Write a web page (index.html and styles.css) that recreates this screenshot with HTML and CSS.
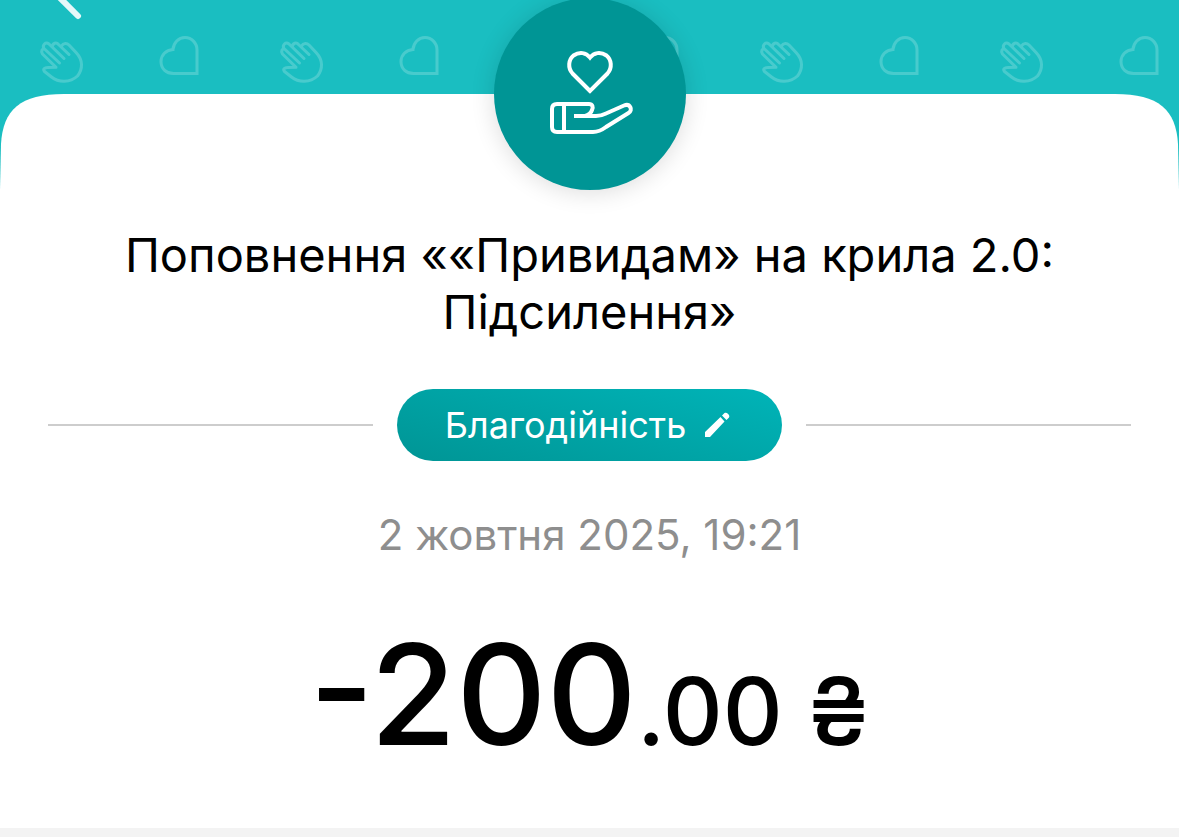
FILE: index.html
```html
<!DOCTYPE html>
<html lang="uk">
<head>
<meta charset="utf-8">
<meta name="viewport" content="width=device-width, initial-scale=1">
<title>Благодійність</title>
<link rel="stylesheet" href="styles.css">
</head>
<body>
<main class="receipt">
  <header class="hero">
    <svg class="hero-pattern" aria-hidden="true">
      <defs>
        <pattern id="charity" width="240" height="94" patternUnits="userSpaceOnUse">
          <g fill="none" stroke="#fff" stroke-opacity=".2" stroke-width="3" stroke-linejoin="round" stroke-linecap="round">
            <path d="M59.500 63 L44 48.500 C42 45 45.500 41.500 49 44 L64 58.500 M52.500 46.500 C52.500 43 56.500 42 58.500 44.500 L69 54.500 M61.500 46 C63.500 42.500 67 43 69 45 L76.500 53 C83 60 83 69 77.500 76 C70 83 58.500 82.500 51.500 77 L44.500 71.500 C42.500 69 45 67.500 47.500 67.500 L56 67.300 L42.500 54 C40.500 50.500 42.500 48.500 44.500 49"/>
            <path stroke-linejoin="miter" d="M197 73.500 V50 C197 43 191.500 37.500 185 37.500 C178.500 37.500 173.500 43 173 49.500 C166 50 161 55 161 61.500 C161 69 166.500 73.500 173.500 73.500 Z"/>
          </g>
        </pattern>
      </defs>
      <rect width="100%" height="100%" fill="url(#charity)"/>
    </svg>
    <div class="sheet-top" aria-hidden="true">
      <svg class="corner" viewBox="0 0 64 96"><path d="M64 0 C20 0 3 16 1 50 L0 96 H64 Z"/></svg>
      <span class="sheet-fill"></span>
      <svg class="corner" viewBox="0 0 64 96"><path d="M0 0 C44 0 61 16 63 50 L64 96 H0 Z"/></svg>
    </div>
    <button class="back" type="button" aria-label="Назад">
      <svg width="48" height="24" viewBox="0 0 48 24"><path d="M18 -4 L38 16" fill="none" stroke="#e6f8f9" stroke-width="6" stroke-linecap="round"/></svg>
    </button>
    <div class="badge">
      <svg width="192" height="192" viewBox="0 0 192 192" aria-hidden="true">
        <g fill="none" stroke="#fff" stroke-width="4">
          <path d="M96 93 L78.500 75.500 C73.500 70 74.500 61.500 79.500 57.500 C85.500 53.500 92 54.500 96 59.500 C100 54.500 106.500 53.500 112.500 57.500 C117.500 61.500 118.500 70 113.500 75.500 Z"/>
          <path d="M80 118 H102 C106 118 109 117 112 115.500 L130 107.500 C136 105 139.500 112 134.500 115 L112 129 C108 132 104 134 99 134 H63 C59.500 134 58 132.500 58 129 V111 C58 107.500 59.500 106 63 106 H95 C98.500 106 99.500 109 98 112 C97 115 95.500 117 91 118"/>
          <path d="M70 106 V134"/>
        </g>
      </svg>
    </div>
  </header>

  <section class="details">
    <h1 class="title">Поповнення ««Привидам» на крила 2.0: Підсилення»</h1>
    <div class="category-row">
      <span class="rule"></span>
      <button class="category" type="button">
        <span>Благодійність</span>
        <svg width="26" height="26" viewBox="0 0 26 26" aria-hidden="true"><path fill="#fff" d="M1 20 L16.500 5 L20.500 9.500 L6 25 H1 Z M18 3.500 L20.500 1 C22.500 -.500 26.500 3 25 5.500 L22.500 8 Z"/></svg>
      </button>
      <span class="rule"></span>
    </div>
    <time class="date" datetime="2025-10-02T19:21">2 жовтня 2025, 19:21</time>
    <p class="amount">-200<span class="amount-minor">.00 ₴</span></p>
  </section>
</main>
</body>
</html>
```

FILE: styles.css
```css
* {
  box-sizing: border-box;
}

body {
  margin: 0;
  background: #f3f3f3;
  color: #000;
  font-family: Inter, "Noto Sans", sans-serif;
}

button {
  border: 0;
  font: inherit;
  cursor: pointer;
}

.hero {
  position: relative;
  background: #1abec1;
}

.hero-pattern {
  display: block;
  width: 100%;
  height: 94px;
}

.sheet-top {
  display: flex;
  height: 96px;
}

.corner {
  flex: none;
  width: 64px;
  height: 96px;
  fill: #fff;
}

.sheet-fill {
  flex: 1;
  background: #fff;
}

.back {
  position: absolute;
  top: 0;
  left: 40px;
  padding: 0;
  background: none;
}

.back svg {
  display: block;
}

.badge {
  position: absolute;
  bottom: 0;
  left: 50%;
  width: 192px;
  height: 192px;
  margin-left: -96px;
  border-radius: 50%;
  background: #009595;
  box-shadow: 0 2px 24px rgba(0, 0, 0, 0.14);
}

.badge svg {
  display: block;
}

.details {
  display: flex;
  flex-direction: column;
  align-items: center;
  padding: 36px 48px 50px;
  background: #fff;
  text-align: center;
}

.title {
  max-width: 1000px;
  margin: 0;
  font-size: 47px;
  font-weight: 400;
  line-height: 57px;
}

.category-row {
  display: flex;
  align-items: center;
  gap: 24px;
  width: 100%;
  margin-top: 49px;
}

.rule {
  flex: 1;
  height: 2px;
  background: #cdcdcd;
}

.category {
  display: flex;
  align-items: center;
  gap: 18px;
  height: 72px;
  padding: 0 52px 0 48px;
  border-radius: 36px;
  background: linear-gradient(15deg, #009595, #00b4b8);
  color: #fff;
  font-size: 36px;
}

.date {
  margin-top: 48px;
  color: #8e8e8e;
  font-size: 42px;
  line-height: 52px;
}

.amount {
  margin: 49px 0 0;
  font-size: 140px;
  font-weight: 500;
  line-height: 168px;
}

.amount-minor {
  font-size: 93px;
  line-height: 1;
}
```
